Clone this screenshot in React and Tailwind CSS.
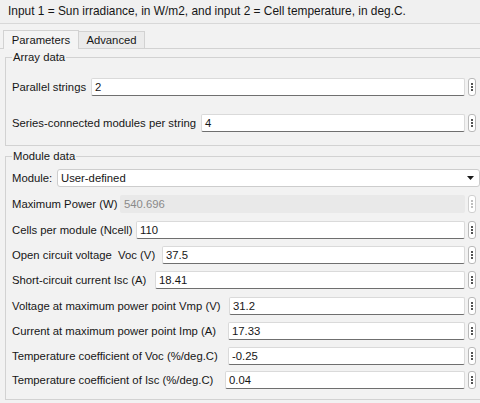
import React from 'react';

const Spinner = ({ disabled }) => (
  <div className={`ml-[3px] mr-[5px] w-[8px] h-[18px] shrink-0 rounded-[3px] border bg-white flex flex-col items-center justify-center gap-[1px] ${disabled ? 'border-[#d0d0d0]' : 'border-[#b9b9b9]'}`}>
    <span className={`w-[2px] h-[2px] rounded-full ${disabled ? 'bg-[#a8a8a8]' : 'bg-[#1a1a1a]'}`} />
    <span className={`w-[2px] h-[2px] rounded-full ${disabled ? 'bg-[#a8a8a8]' : 'bg-[#1a1a1a]'}`} />
    <span className={`w-[2px] h-[2px] rounded-full ${disabled ? 'bg-[#a8a8a8]' : 'bg-[#1a1a1a]'}`} />
  </div>
);

const ParamRow = ({ label, labelWidth, value, disabled, className = '' }) => (
  <div className={`flex items-center h-[18px] ${className}`}>
    <span className={`whitespace-pre shrink-0 ${labelWidth}`}>{label}</span>
    {disabled ? (
      <div className="ml-[5px] flex-1 h-[18px] bg-[#e9e9e9] rounded-[2px] flex items-center pl-[4px] text-[#8a8a8a]">
        {value}
      </div>
    ) : (
      <div className="ml-[5px] flex-1 h-[18px] bg-white border border-[#dadada] border-b-[#6f6f6f] rounded-[2px] flex items-center pl-[3px]">
        {value}
      </div>
    )}
    <Spinner disabled={disabled} />
  </div>
);

const moduleParams = [
  { label: 'Cells per module (Ncell)', w: 'w-[119px]', value: '110', mt: 'mt-[8px]' },
  { label: 'Open circuit voltage  Voc (V)', w: 'w-[145px]', value: '37.5', mt: 'mt-[7px]' },
  { label: 'Short-circuit current Isc (A)', w: 'w-[138px]', value: '18.41', mt: 'mt-[7px]' },
  { label: 'Voltage at maximum power point Vmp (V)', w: 'w-[212px]', value: '31.2', mt: 'mt-[8px]' },
  { label: 'Current at maximum power point Imp (A)', w: 'w-[211px]', value: '17.33', mt: 'mt-[7px]' },
  { label: 'Temperature coefficient of Voc (%/deg.C)', w: 'w-[211px]', value: '-0.25', mt: 'mt-[7px]' },
  { label: 'Temperature coefficient of Isc (%/deg.C)', w: 'w-[208px]', value: '0.04', mt: 'mt-[6px]' },
];

export default function App() {
  return (
    <div className="w-[480px] h-[403px] overflow-hidden bg-[#f2f2f2] text-[#161616] text-[11.3px] leading-[13px] font-['Liberation_Sans',Arial,sans-serif]">
      {/* Description */}
      <div className="h-[24px] flex items-center pl-[8px] border-b border-[#d8d8d8] bg-[#f0f0f0] text-[11.9px]">
        Input 1 = Sun irradiance, in W/m2, and input 2 = Cell temperature, in deg.C.
      </div>

      {/* Tabs */}
      <div className="mt-[6px] h-[19px] flex items-end pl-[3px] border-b border-[#d2d2d2]">
        <div className="w-[76px] h-[19px] -mb-px flex items-center justify-center border border-b-0 border-[#d2d2d2] bg-[#f4f4f4]">
          Parameters
        </div>
        <div className="w-[66px] h-[18px] -mb-px flex items-center justify-center border border-l-0 border-[#d2d2d2] bg-[#ebebeb]">
          Advanced
        </div>
      </div>

      {/* Array data */}
      <fieldset className="ml-[5px] mt-[2px] w-[477px] h-[95px] border border-[#d2d2d2] pl-[6px]">
        <legend className="px-[1px]">Array data</legend>
        <ParamRow label="Parallel strings" labelWidth="w-[74px]" value="2" className="mt-[14px]" />
        <ParamRow label="Series-connected modules per string" labelWidth="w-[184px]" value="4" className="mt-[18px]" />
      </fieldset>

      {/* Module data */}
      <fieldset className="ml-[5px] mt-[4px] w-[477px] h-[250px] border border-[#d2d2d2] pl-[6px]">
        <legend className="px-[1px]">Module data</legend>
        <div className="flex items-center h-[18px] mt-[6px]">
          <span className="shrink-0 w-[40px]">Module:</span>
          <div className="ml-[5px] mr-[1px] flex-1 h-[18px] bg-white border border-[#cdcdcd] rounded-[3px] flex items-center justify-between pl-[3px] pr-[5px]">
            <span>User-defined</span>
            <svg width="7" height="4" viewBox="0 0 7 4">
              <path d="M0 0 L7 0 L3.5 4 Z" fill="#1a1a1a" />
            </svg>
          </div>
        </div>
        <ParamRow label="Maximum Power (W)" labelWidth="w-[103px]" value="540.696" disabled className="mt-[8px]" />
        {moduleParams.map((p) => (
          <ParamRow key={p.label} label={p.label} labelWidth={p.w} value={p.value} className={p.mt} />
        ))}
      </fieldset>
    </div>
  );
}
